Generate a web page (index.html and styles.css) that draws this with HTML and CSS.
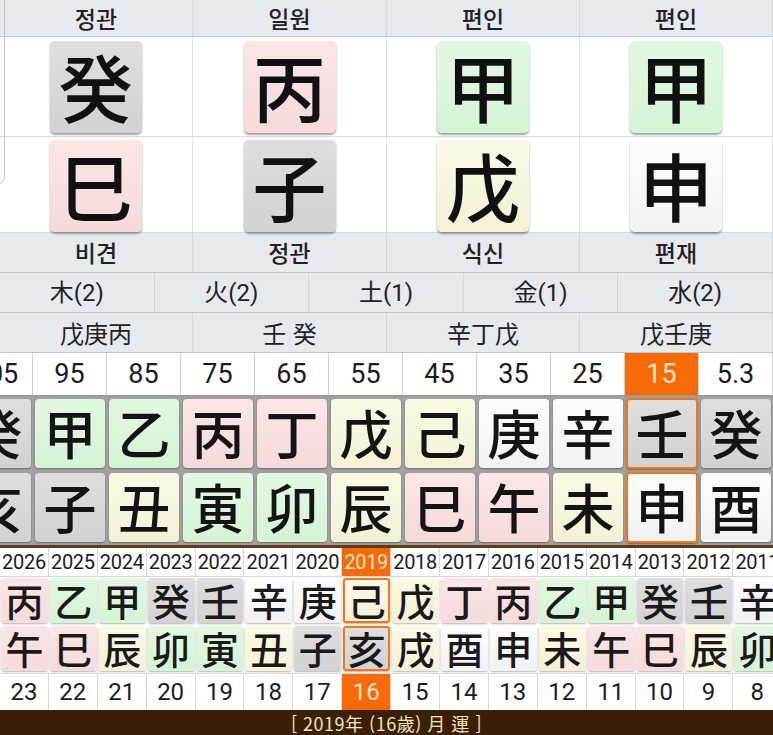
FILE: index.html
```html
<!DOCTYPE html>
<html lang="ko">
<head>
<meta charset="utf-8">
<link rel="stylesheet" href="styles.css">
</head>
<body>
<div class="page">
  <div class="edge"></div>

  <div class="pillars">
    <div class="ph">정관</div><div class="ph">일원</div><div class="ph">편인</div><div class="ph">편인</div>
    <div class="pc stem"><div class="big t-gray">癸</div></div>
    <div class="pc stem"><div class="big t-pink">丙</div></div>
    <div class="pc stem"><div class="big t-green">甲</div></div>
    <div class="pc stem"><div class="big t-green">甲</div></div>
    <div class="pc branch"><div class="big t-pink">巳</div></div>
    <div class="pc branch"><div class="big t-gray">子</div></div>
    <div class="pc branch"><div class="big t-yellow">戊</div></div>
    <div class="pc branch"><div class="big t-white">申</div></div>
  </div>

  <div class="band four">
    <div class="bc">비견</div><div class="bc">정관</div><div class="bc">식신</div><div class="bc">편재</div>
  </div>
  <div class="band five">
    <div class="bc">木(2)</div><div class="bc">火(2)</div><div class="bc">土(1)</div><div class="bc">金(1)</div><div class="bc">水(2)</div>
  </div>
  <div class="band four hid">
    <div class="bc">戊庚丙</div><div class="bc">壬 癸</div><div class="bc">辛丁戊</div><div class="bc">戊壬庚</div>
  </div>

  <div class="dnums">
    <div class="dn">105</div><div class="dn">95</div><div class="dn">85</div><div class="dn">75</div><div class="dn">65</div><div class="dn">55</div><div class="dn">45</div><div class="dn">35</div><div class="dn">25</div><div class="dn on">15</div><div class="dn">5.3</div>
  </div>
  <div class="dtiles">
    <div class="dt t-gray">癸</div><div class="dt t-green">甲</div><div class="dt t-green">乙</div><div class="dt t-pink">丙</div><div class="dt t-pink">丁</div><div class="dt t-yellow">戊</div><div class="dt t-yellow">己</div><div class="dt t-white">庚</div><div class="dt t-white">辛</div><div class="dt t-gray sel">壬</div><div class="dt t-gray">癸</div>
  </div>
  <div class="dtiles">
    <div class="dt t-gray">亥</div><div class="dt t-gray">子</div><div class="dt t-yellow">丑</div><div class="dt t-green">寅</div><div class="dt t-green">卯</div><div class="dt t-yellow">辰</div><div class="dt t-pink">巳</div><div class="dt t-pink">午</div><div class="dt t-yellow">未</div><div class="dt t-white sel">申</div><div class="dt t-white">酉</div>
  </div>

  <div class="brown"></div>

  <div class="yrow years">
    <div class="yc">2026</div><div class="yc">2025</div><div class="yc">2024</div><div class="yc">2023</div><div class="yc">2022</div><div class="yc">2021</div><div class="yc">2020</div><div class="yc on">2019</div><div class="yc">2018</div><div class="yc">2017</div><div class="yc">2016</div><div class="yc">2015</div><div class="yc">2014</div><div class="yc">2013</div><div class="yc">2012</div><div class="yc">2011</div>
  </div>
  <div class="yrow ytiles">
    <div class="yt t-pink">丙</div><div class="yt t-green">乙</div><div class="yt t-green">甲</div><div class="yt t-gray">癸</div><div class="yt t-gray">壬</div><div class="yt t-white">辛</div><div class="yt t-white">庚</div><div class="yt t-yellow sel">己</div><div class="yt t-yellow">戊</div><div class="yt t-pink">丁</div><div class="yt t-pink">丙</div><div class="yt t-green">乙</div><div class="yt t-green">甲</div><div class="yt t-gray">癸</div><div class="yt t-gray">壬</div><div class="yt t-white">辛</div>
  </div>
  <div class="yrow ytiles">
    <div class="yt t-pink">午</div><div class="yt t-pink">巳</div><div class="yt t-yellow">辰</div><div class="yt t-green">卯</div><div class="yt t-green">寅</div><div class="yt t-yellow">丑</div><div class="yt t-gray">子</div><div class="yt t-gray sel">亥</div><div class="yt t-yellow">戌</div><div class="yt t-white">酉</div><div class="yt t-white">申</div><div class="yt t-yellow">未</div><div class="yt t-pink">午</div><div class="yt t-pink">巳</div><div class="yt t-yellow">辰</div><div class="yt t-green">卯</div>
  </div>
  <div class="yrow ages">
    <div class="ya">23</div><div class="ya">22</div><div class="ya">21</div><div class="ya">20</div><div class="ya">19</div><div class="ya">18</div><div class="ya">17</div><div class="ya on">16</div><div class="ya">15</div><div class="ya">14</div><div class="ya">13</div><div class="ya">12</div><div class="ya">11</div><div class="ya">10</div><div class="ya">9</div><div class="ya">8</div>
  </div>

  <div class="footer">[ 2019年 (16歲) 月 運 ]</div>
</div>
</body>
</html>
```

FILE: styles.css
```css
* { box-sizing: border-box; margin: 0; padding: 0; }
html, body { width: 773px; height: 735px; overflow: hidden; background: #fff; }
body { font-family: Roboto, "Noto Sans CJK KR", sans-serif; color: #1c1c1c; }

.page { position: relative; width: 773px; height: 735px; overflow: hidden; }

.edge {
  position: absolute; left: -10px; top: -10px; width: 15px; height: 195px;
  border-right: 1px solid #c4c4c4; border-bottom: 1px solid #c4c4c4;
  border-bottom-right-radius: 9px; z-index: 2;
}

/* colour tiles */
.t-gray   { background: linear-gradient(#dedede, #d2d2d2); }
.t-pink   { background: linear-gradient(#fbe6e6, #f6dada); }
.t-green  { background: linear-gradient(#e2f8e2, #d5f3d5); }
.t-yellow { background: linear-gradient(#fbf9e6, #f4f1d6); }
.t-white  { background: linear-gradient(#fdfdfd, #f2f2f2); }

/* four pillars */
.pillars {
  display: grid; grid-template-columns: 193px 194px 193px 193px;
  grid-template-rows: 37px 100px 96px;
}
.ph {
  background: #e6eaee;
  border-bottom: 1px solid #c6cacf; border-right: 1px solid #d3d7db;
  display: flex; align-items: center; justify-content: center;
  font: 500 23px/1 "Noto Sans CJK KR", sans-serif; color: #222;
}
.pc {
  display: flex; justify-content: center; align-items: flex-start;
  border-right: 1px solid #e2e2e2; border-bottom: 1px solid #dcdcdc;
}
.pc.stem { padding-top: 4px; }
.pc.branch { padding-top: 3px; }
.big {
  width: 92px; height: 92px; border-radius: 5px; padding-bottom: 4px;
  display: flex; align-items: center; justify-content: center;
  font: 500 74px/1 "Noto Sans CJK TC", "Noto Sans CJK JP", sans-serif;
  color: #111;
  box-shadow: 0 2px 2px rgba(0,0,0,0.35), 0 0 1px rgba(0,0,0,0.2);
}

/* grey bands */
.band {
  display: grid; height: 40px; grid-template-rows: 39px; background: #e6eaee;
  border-bottom: 1px solid #c3c7cc;
}
.band.four { grid-template-columns: 193px 194px 193px 193px; }
.band.five { grid-template-columns: repeat(5, 1fr); }
.bc {
  display: flex; align-items: center; justify-content: center;
  border-right: 1px solid #d2d6da;
  font: 500 23px/1 "Noto Sans CJK KR", "Noto Sans CJK TC", sans-serif; color: #222;
}
.band.five .bc { font-family: Roboto, "Noto Sans CJK TC", sans-serif; font-weight: 400; font-size: 24px; }
.band.hid .bc { font-family: "Noto Sans CJK TC", sans-serif; font-weight: 400; font-size: 24px; }

/* daeun */
.dnums, .dtiles {
  display: grid; grid-template-columns: repeat(11, 74px); margin-left: -41px; width: 814px;
}
.dnums { height: 44px; grid-template-rows: 42px; background: #fff; border-bottom: 2px solid #9a9a9a; }
.dn {
  display: flex; align-items: center; justify-content: center;
  border-right: 1px solid #cfcfcf;
  font: 400 27px/1 Roboto, sans-serif; color: #1c1c1c;
}
.dn.on { background: #f66b05; color: #fde3c4; }
.dtiles { height: 74px; grid-template-rows: 72px; background: #a2a2a2; padding: 1px 0; }
.dt {
  margin: 1px 2px 2px 2px; border-radius: 4px; padding-bottom: 2px;
  display: flex; align-items: center; justify-content: center;
  font: 500 53px/1 "Noto Sans CJK TC", "Noto Sans CJK JP", sans-serif; color: #141414;
  box-shadow: 0 1px 2px rgba(0,0,0,0.35);
}
.dt.sel { border: 2px solid #f2771a; margin: 0 1px 1px 1px; }

.brown { height: 3px; background: #5e3a17; }

/* yearly */
.yrow { display: grid; grid-template-columns: repeat(16, 48.9px); width: 783px; }
.years { height: 29px; grid-template-rows: 28px; background: #fff; border-bottom: 1px solid #d8d8d8; }
.yc {
  display: flex; align-items: center; justify-content: center;
  border-right: 1px solid #d6d6d6;
  font: 400 20px/1 Roboto, sans-serif; letter-spacing: -0.3px; color: #1c1c1c;
}
.yc.on { background: #f66b05; color: #fde3c4; }
.ytiles { height: 48px; grid-template-rows: 48px; background: #fff; }
.yt {
  margin: 1px 1px 2px 1px; border-radius: 3px; padding-bottom: 2px;
  display: flex; align-items: center; justify-content: center;
  font: 500 38px/1 "Noto Sans CJK TC", "Noto Sans CJK JP", sans-serif; color: #1a1a1a;
  box-shadow: 0 1px 2px rgba(0,0,0,0.3);
}
.yt.sel { border: 2px solid #f2771a; }
.ages { height: 37px; grid-template-rows: 36px; background: #fff; border-top: 1px solid #dcdcdc; }
.ya {
  display: flex; align-items: center; justify-content: center;
  border-right: 1px solid #d6d6d6;
  font: 400 24px/1 Roboto, sans-serif; color: #1c1c1c;
}
.ya.on { background: #f66b05; color: #fde3c4; }

.footer {
  height: 25px; background: #3c1f07; color: #f3e3c2;
  display: flex; align-items: center; justify-content: center;
  font: 400 18px/1 "Noto Sans CJK TC", "Noto Sans CJK JP", sans-serif; letter-spacing: 0.5px;
}
```
